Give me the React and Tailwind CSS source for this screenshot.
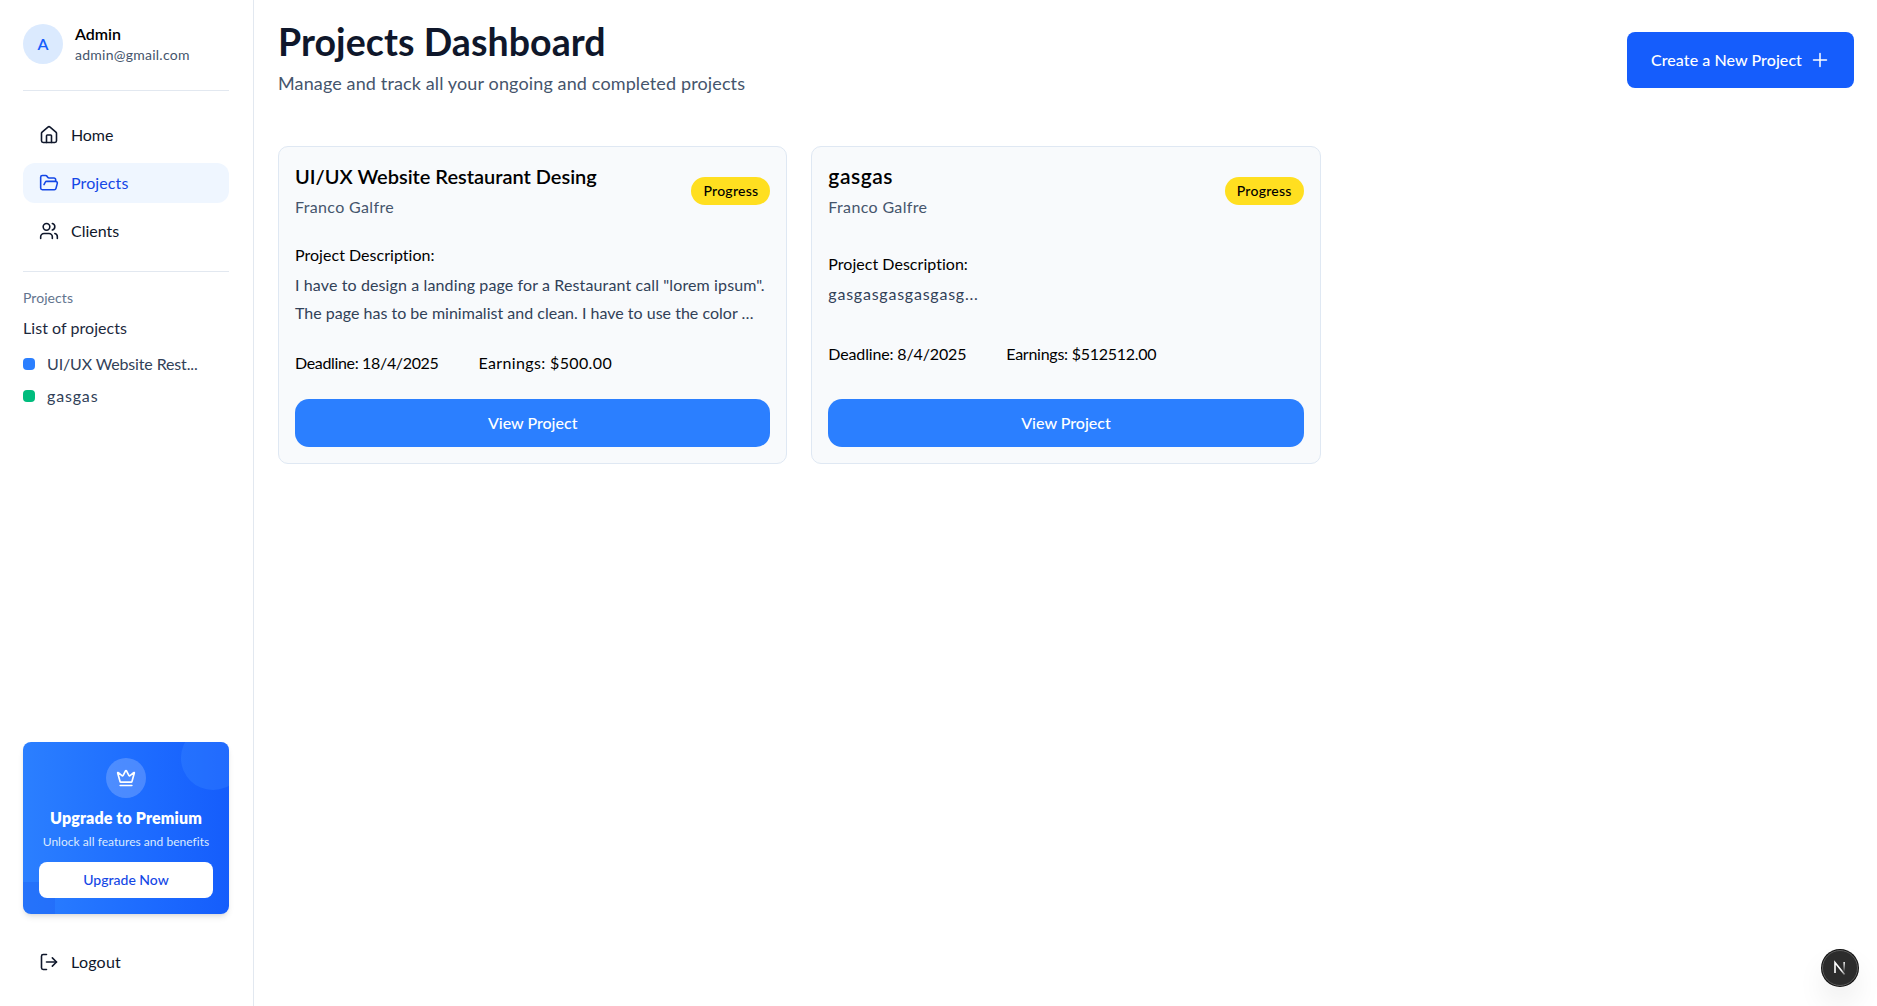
import React from "react";
import { House, FolderOpen, Users, LogOut, Crown } from "lucide-react";

const nav = [
  { label: "Home", Icon: House, text: "tracking-[-0.1px]" },
  { label: "Projects", Icon: FolderOpen, text: "tracking-[0.1px]", active: true },
  { label: "Clients", Icon: Users, text: "tracking-[-0.02px]" },
];

const projects = [
  {
    title: "UI/UX Website Restaurant Desing",
    titleClass: "text-xl tracking-[-0.02px]",
    client: "Franco Galfre",
    lines: [
      { t: 'I have to design a landing page for a Restaurant call "lorem ipsum".', c: "tracking-[0.12px]" },
      { t: "The page has to be minimalist and clean. I have to use the color …", c: "tracking-[0.01px]" },
    ],
    deadline: "18/4/2025",
    deadlineClass: "tracking-[-0.34px]",
    earnings: "$500.00",
    earningsClass: "tracking-[0.36px]",
  },
  {
    title: "gasgas",
    titleClass: "text-[21px] tracking-[0.55px]",
    client: "Franco Galfre",
    lines: [{ t: "gasgasgasgasgasg...", c: "tracking-[0.78px]" }],
    deadline: "8/4/2025",
    deadlineClass: "tracking-[-0.15px]",
    earnings: "$512512.00",
    earningsClass: "tracking-[-0.26px]",
  },
];

function Sidebar() {
  return (
    <aside className="flex h-full w-[254px] shrink-0 flex-col border-r border-slate-200 pr-6 pl-[23px] pt-[23px] pb-6">
      <div className="flex items-center gap-3 border-b border-slate-200 pb-[25px]">
        <div className="flex size-10 items-center justify-center rounded-full bg-blue-100 font-semibold text-blue-600">
          A
        </div>
        <div className="flex flex-col">
          <span className="text-base leading-[22px] font-semibold text-black">Admin</span>
          <span className="text-sm leading-5 tracking-[0.25px] text-slate-600">admin@gmail.com</span>
        </div>
      </div>

      <nav className="flex flex-col gap-2 border-b border-slate-200 pt-6 pb-5">
        {nav.map(({ label, Icon, text, active }) => (
          <a
            key={label}
            className={
              active
                ? "flex h-10 items-center gap-3 rounded-xl bg-blue-50 px-4 text-blue-700"
                : "flex h-10 items-center gap-3 rounded-xl px-4 text-slate-900"
            }
          >
            <Icon size={20} strokeWidth={1.9} />
            <span className={text}>{label}</span>
          </a>
        ))}
      </nav>

      <div className="flex flex-col pt-4">
        <span className="text-sm tracking-[0.06px] text-slate-500">Projects</span>
        <span className="mt-2 text-base tracking-[0.05px] text-slate-800">List of projects</span>
        <div className="mt-2 flex flex-col">
          <div className="flex h-8 items-center gap-3">
            <span className="size-3 rounded bg-blue-500" />
            <span className="tracking-[-0.14px] text-slate-700">UI/UX Website Rest...</span>
          </div>
          <div className="flex h-8 items-center gap-3">
            <span className="size-3 rounded bg-[#00bc7d]" />
            <span className="tracking-[0.85px] text-slate-700">gasgas</span>
          </div>
        </div>
      </div>

      <div className="relative mt-auto flex h-[172px] flex-col items-center overflow-hidden rounded-lg bg-linear-to-r from-blue-500 to-blue-600 p-4 shadow-md">
        <div className="absolute -top-4 -right-4 size-16 rounded-full bg-blue-400/20" />
        <div className="absolute -bottom-4 -left-4 h-12 w-12 rounded-tr-sm bg-blue-700/20" />
        <div className="flex size-10 shrink-0 items-center justify-center rounded-full bg-white/20 text-white">
          <Crown size={20} strokeWidth={2} />
        </div>
        <span className="mt-2 text-base leading-6 font-extrabold tracking-[0.12px] text-white">Upgrade to Premium</span>
        <span className="mt-1 text-xs leading-4 tracking-[0.03px] whitespace-nowrap text-blue-100">
          Unlock all features and benefits
        </span>
        <button className="relative mt-3 h-9 w-full shrink-0 rounded-lg bg-white text-sm font-medium text-blue-700">
          Upgrade Now
        </button>
      </div>

      <a className="mt-7 flex h-10 items-center gap-3 px-4 text-slate-900">
        <LogOut size={20} strokeWidth={1.9} />
        <span className="tracking-[0.25px]">Logout</span>
      </a>
    </aside>
  );
}

function ProjectCard({ p }) {
  return (
    <article className="flex h-[318px] flex-col justify-between rounded-[10px] border border-[#dfe8f3] bg-slate-50 p-4">
      <div className="flex items-center justify-between">
        <div className="-mt-px flex flex-col gap-[5px]">
          <h2 className={"leading-7 font-semibold text-black " + p.titleClass}>{p.title}</h2>
          <span className="leading-6 tracking-[0.35px] text-slate-600">{p.client}</span>
        </div>
        <span className="flex h-7 items-center rounded-full bg-[#ffdf20] px-3 text-sm font-medium tracking-[0.25px] text-black">
          Progress
        </span>
      </div>
      <div className="flex flex-col gap-1">
        <span className="leading-6 tracking-[0.03px] text-black">Project Description:</span>
        <p className="leading-7 whitespace-nowrap text-slate-700">
          {p.lines.map((l) => (
            <span key={l.t} className={"block " + l.c}>{l.t}</span>
          ))}
        </p>
      </div>
      <div className="flex gap-10 leading-6 text-black">
        <span className={p.deadlineClass}>Deadline: {p.deadline}</span>
        <span className={p.earningsClass}>Earnings: {p.earnings}</span>
      </div>
      <button className="h-12 w-full shrink-0 rounded-[14px] bg-blue-500 font-medium text-white">View Project</button>
    </article>
  );
}

export default function App() {
  return (
    <div className="relative flex h-screen w-full overflow-hidden bg-white font-['Lato',sans-serif] text-base">
      <Sidebar />
      <main className="flex-1 p-6 pr-[23px]">
        <header className="flex h-[74px] items-start justify-between">
          <div className="-mt-0.5">
            <h1 className="text-[37.5px] leading-10 font-bold tracking-[0.07px] text-slate-900">Projects Dashboard</h1>
            <p className="mt-[7px] text-lg leading-7 tracking-[0.13px] text-slate-600">
              Manage and track all your ongoing and completed projects
            </p>
          </div>
          <button className="mt-2 flex h-14 w-[227px] items-center justify-between rounded-lg bg-blue-600 pr-[22px] pl-6 font-medium text-white">
            <span className="tracking-[0.07px]">Create a New Project</span>
            <svg width="24" height="24" viewBox="0 0 24 24" fill="none" stroke="currentColor" strokeWidth="1.5" strokeLinecap="round">
              <path d="M5.5 12h13M12 5.5v13" />
            </svg>
          </button>
        </header>
        <section className="mt-12 grid grid-cols-3 gap-6">
          {projects.map((p) => (
            <ProjectCard key={p.title} p={p} />
          ))}
        </section>
      </main>

      <div className="absolute right-[19px] bottom-[20px] flex size-[36px] items-center justify-center rounded-full border border-[#5c5c5c] bg-[#2c2c2c] shadow-[0_0_0_1px_#111,0_16px_32px_-8px_rgba(0,0,0,0.24)]">
        <svg width="14" height="16" viewBox="0 0 14 16" fill="none" strokeWidth="1.6">
          <defs>
            <linearGradient id="diag" x1="2" y1="2" x2="13" y2="15" gradientUnits="userSpaceOnUse">
              <stop offset="0.6" stopColor="#fff" />
              <stop offset="1" stopColor="#fff" stopOpacity="0.2" />
            </linearGradient>
            <linearGradient id="stem" x1="0" y1="2" x2="0" y2="12" gradientUnits="userSpaceOnUse">
              <stop stopColor="#fff" />
              <stop offset="1" stopColor="#fff" stopOpacity="0" />
            </linearGradient>
          </defs>
          <path d="M2 13V2.6L11.6 14.6" stroke="url(#diag)" />
          <path d="M10.4 2h1.5v10h-1.5z" fill="url(#stem)" />
        </svg>
      </div>
    </div>
  );
}
